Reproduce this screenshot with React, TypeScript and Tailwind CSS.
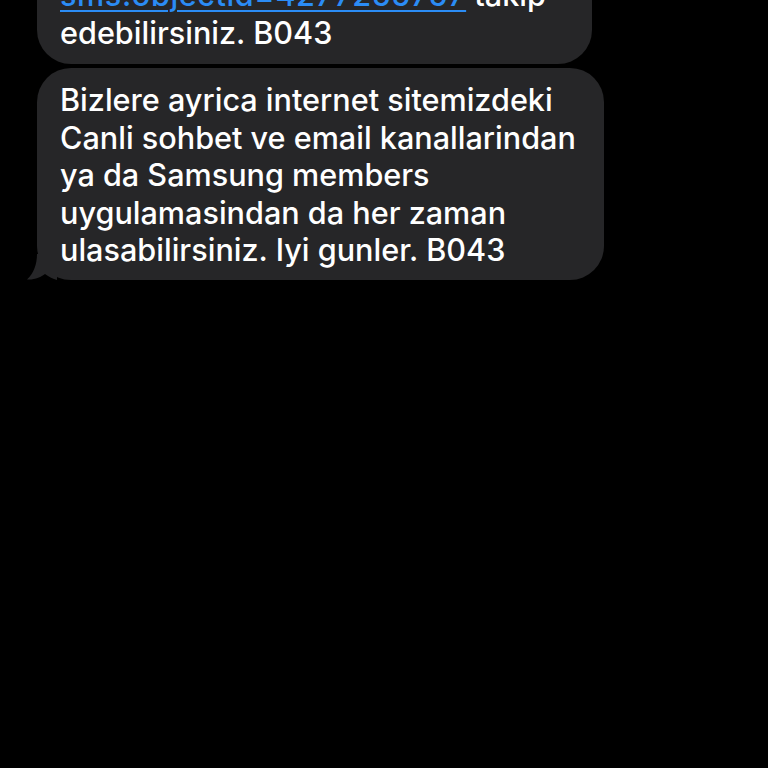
export default function App() {
  return (
    <div className="h-[768px] w-[768px] overflow-hidden bg-black" style={{ fontFamily: 'Inter, "Noto Sans", sans-serif' }}>
      <div className="-mt-[37px] flex flex-col gap-[4px] pl-[37px] text-[30.6px] font-medium leading-[37.5px] text-white">
        {/* earlier message, cut off at top */}
        <div className="w-[555px] rounded-[34px] bg-[#262628] pb-[13px] pl-[23px] pt-[13px]">
          <div className="whitespace-nowrap">
            <span className="tracking-[0.6px] text-[#2b8cf5] underline decoration-[2px] underline-offset-[4px]">sms:objectid=4277255757</span> takip
          </div>
          <div className="whitespace-nowrap">edebilirsiniz. B043</div>
        </div>

        {/* last message with tail */}
        <div className="relative w-[567px] rounded-[34px] bg-[#262628] pb-[11px] pl-[23px] pt-[13px]">
          <div className="whitespace-nowrap">Bizlere ayrica internet sitemizdeki</div>
          <div className="whitespace-nowrap">Canli sohbet ve email kanallarindan</div>
          <div className="whitespace-nowrap">ya da Samsung members</div>
          <div className="whitespace-nowrap">uygulamasindan da her zaman</div>
          <div className="whitespace-nowrap">ulasabilirsiniz. Iyi gunler. B043</div>
          <svg className="absolute -left-[10px] bottom-0" width="30" height="26" viewBox="0 0 30 26">
            <path d="M10 0 C10 10 7 19 0 25.5 C8 26 14 23 18 20 C22 23 26 25 30 26 L30 0 Z" fill="#262628" />
          </svg>
        </div>
      </div>
    </div>
  )
}
